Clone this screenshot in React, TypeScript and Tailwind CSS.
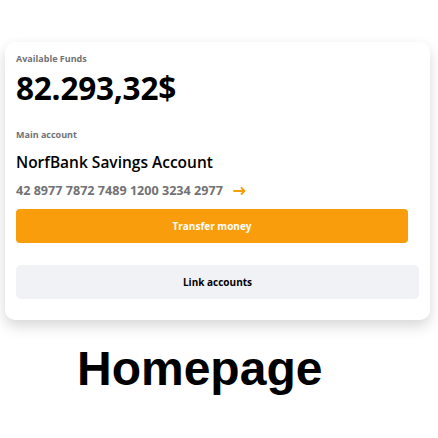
export default function App() {
  return (
    <div className="w-[438px] h-[438px] bg-white overflow-hidden font-['Open_Sans',sans-serif]">
      <div className="pt-[42px] pl-[5px] pr-[8px]">
        <div className="rounded-[10px] bg-white shadow-[0_6px_14px_rgba(0,0,0,0.16)] px-[11px] pt-[12px] pb-[21px]">
          <div className="text-[9px] font-bold text-[#717175] leading-[10px]">Available Funds</div>
          <div className="mt-[5px] text-[31.5px] font-bold text-black leading-[38px] tracking-[-0.2px]">82.293,32$</div>

          <div className="mt-[23px] text-[9px] font-bold text-[#717175] leading-[10px]">Main account</div>
          <div className="mt-[11px] text-[15.5px] font-semibold text-black leading-[22px]">NorfBank Savings Account</div>
          <div className="mt-[9px] flex items-center gap-[10px] text-[12.6px] font-bold text-[#727274] leading-[18px]">
            <span>42 8977 7872 7489 1200 3234 2977</span>
            <svg width="13" height="8" viewBox="0 0 13 8" fill="none" stroke="#f59e0b" strokeWidth="1.8" strokeLinecap="round" strokeLinejoin="round">
              <path d="M1 4h10.5M8.5 1l3 3-3 3" />
            </svg>
          </div>

          <button className="mt-[9px] mr-[11px] w-[calc(100%-11px)] h-[34px] rounded-[4px] bg-[#f99d0c] text-white text-[10px] font-bold flex items-center justify-center">
            Transfer money
          </button>
          <button className="mt-[22px] w-full h-[34px] rounded-[5px] bg-[#f1f2f6] text-black text-[10px] font-bold flex items-center justify-center">
            Link accounts
          </button>
        </div>
      </div>

      <div className="mt-[22px] pl-[77px] font-['Liberation_Sans',Arial,sans-serif] font-bold text-[48px] leading-[54px] text-black">
        Homepage
      </div>
    </div>
  );
}
